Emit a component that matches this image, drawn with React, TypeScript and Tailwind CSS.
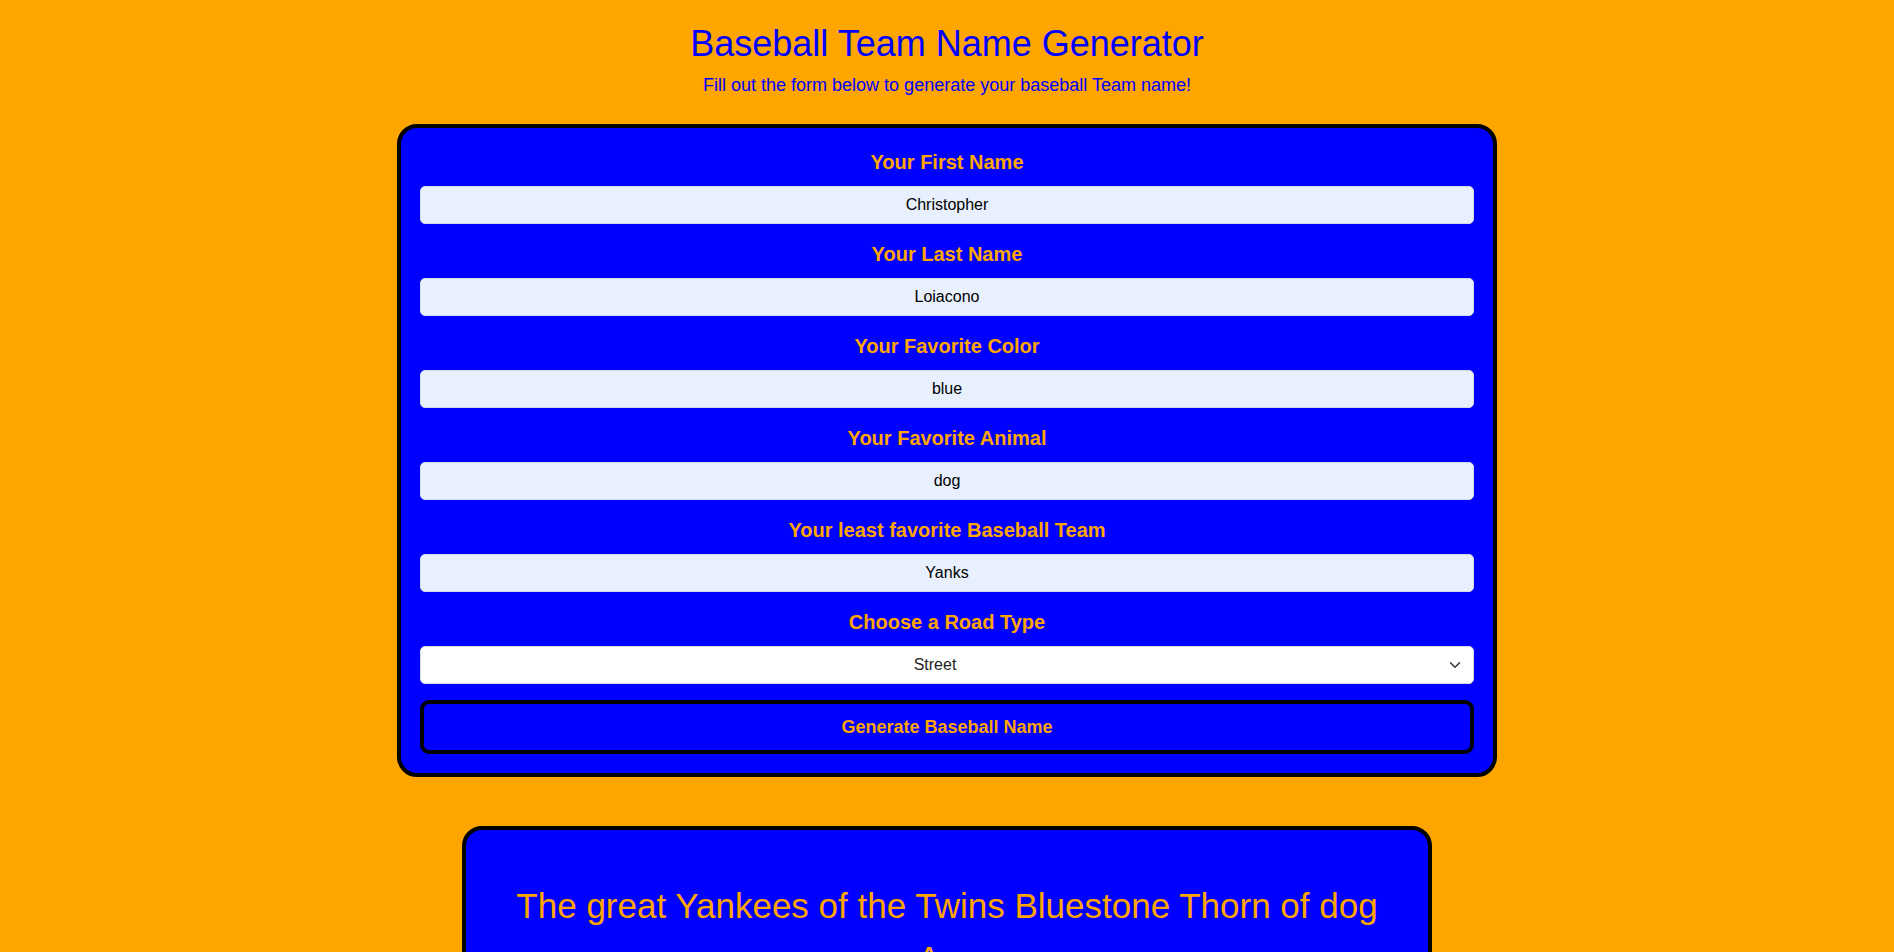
import { ChevronDown } from 'lucide-react'

const fields = [
  { label: 'Your First Name', value: 'Christopher' },
  { label: 'Your Last Name', value: 'Loiacono' },
  { label: 'Your Favorite Color', value: 'blue' },
  { label: 'Your Favorite Animal', value: 'dog' },
  { label: 'Your least favorite Baseball Team', value: 'Yanks' },
]

function Field({ label, value }: { label: string; value: string }) {
  return (
    <div className="flex flex-col">
      <label className="text-[20px] leading-[22px] font-bold text-[#ffa500] text-center">{label}</label>
      <input
        type="text"
        defaultValue={value}
        className="mt-[13px] h-[38px] w-full rounded-[5px] border border-[#d3dae6] bg-[#e8f0fe] text-center text-[16px] text-black outline-none"
      />
    </div>
  )
}

export default function App() {
  return (
    <div
      className="min-h-[952px] w-full bg-[#ffa500] flex flex-col items-center"
      style={{ fontFamily: '"Liberation Sans", Arial, sans-serif' }}
    >
      <h1 className="mt-[23px] text-[36px] leading-[41px] text-[#0000ff]">Baseball Team Name Generator</h1>
      <p className="mt-[11px] text-[18px] leading-[21px] text-[#0000ff]">
        Fill out the form below to generate your baseball Team name!
      </p>

      <form
        className="mt-[28px] w-[1100px] rounded-[20px] border-4 border-black bg-[#0000ff] px-[19px] pt-[23px] pb-[19px] flex flex-col gap-[19px]"
        onSubmit={(e) => e.preventDefault()}
      >
        {fields.map((f) => (
          <Field key={f.label} label={f.label} value={f.value} />
        ))}

        <div className="flex flex-col">
          <label className="text-[20px] leading-[22px] font-bold text-[#ffa500] text-center">Choose a Road Type</label>
          <div className="relative mt-[13px]">
            <select
              defaultValue="Street"
              className="h-[38px] w-full appearance-none rounded-[5px] border border-[#d3dae6] bg-white pr-6 text-[16px] text-[#222] outline-none [text-align-last:center]"
            >
              <option>Street</option>
              <option>Avenue</option>
              <option>Road</option>
              <option>Lane</option>
            </select>
            <ChevronDown
              className="pointer-events-none absolute right-[10px] top-[10px] h-[18px] w-[18px] text-[#333]"
              strokeWidth={2}
            />
          </div>
        </div>

        <button
          type="submit"
          className="-mt-[3px] h-[54px] w-full rounded-[9px] border-4 border-black bg-[#0000ff] text-[18px] font-bold text-[#ffa500]"
        >
          Generate Baseball Name
        </button>
      </form>

      <div className="mt-[49px] w-[970px] rounded-[20px] border-4 border-black bg-[#0000ff] px-[20px] pt-[49px] pb-[40px]">
        <p className="text-center text-[35px] leading-[53px] text-[#ffa500]">
          The great Yankees of the Twins Bluestone Thorn of dog Ave
        </p>
      </div>
    </div>
  )
}
